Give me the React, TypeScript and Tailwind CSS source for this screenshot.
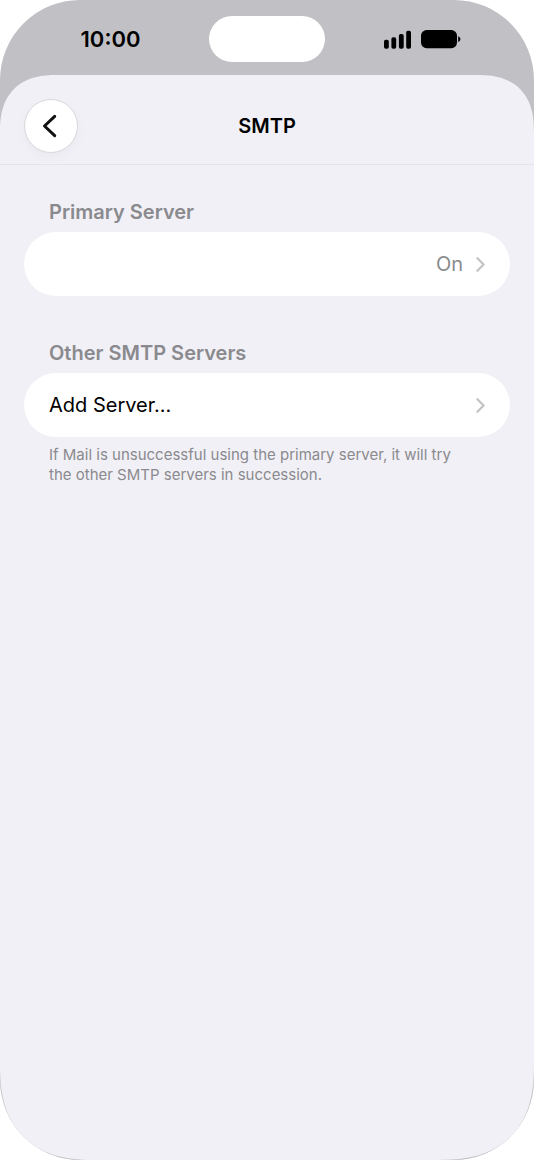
import type { ReactNode } from "react";

interface SectionProps {
  title: string;
  footer?: string;
  children: ReactNode;
}

interface RowProps {
  label?: string;
  value?: string;
  ariaLabel?: string;
}

function SignalIcon() {
  return (
    <svg width="27" height="19" viewBox="0 0 27 19" fill="currentColor" aria-hidden="true">
      <rect x="0" y="9.8" width="4.8" height="9" rx="1.8" />
      <rect x="7.4" y="7.3" width="4.8" height="11.5" rx="1.8" />
      <rect x="14.9" y="3.9" width="4.8" height="14.9" rx="1.8" />
      <rect x="22.2" y="0.8" width="4.8" height="18" rx="1.8" />
    </svg>
  );
}

function BatteryIcon() {
  return (
    <svg width="40" height="19" viewBox="0 0 40 19" fill="currentColor" aria-hidden="true">
      <rect x="0" y="0" width="36" height="18.2" rx="5.6" />
      <path d="M37.2 6.2c1.4.5 2.2 1.6 2.2 2.9s-.8 2.4-2.2 2.9z" />
    </svg>
  );
}

function ChevronRight() {
  return (
    <svg
      width="9"
      height="15"
      viewBox="0 0 9 15"
      fill="none"
      stroke="#c4c4c7"
      strokeWidth="2.3"
      strokeLinecap="round"
      strokeLinejoin="round"
      aria-hidden="true"
    >
      <path d="M1.4 1.3 7.6 7.5 1.4 13.7" />
    </svg>
  );
}

function StatusBar() {
  return (
    <div className="grid h-[75px] grid-cols-[1fr_116px_1fr] pt-4 text-black">
      <span className="mt-2 ml-3 text-center text-[22px] leading-[30px] font-semibold">
        10:00
      </span>
      <div className="h-[46px] rounded-full bg-white" />
      <div className="mt-[14px] mr-[14px] flex items-start justify-center gap-[10px]">
        <SignalIcon />
        <BatteryIcon />
      </div>
    </div>
  );
}

function Section({ title, footer, children }: SectionProps) {
  return (
    <section>
      <h2 className="mb-2 px-[25px] text-[20px] leading-6 font-semibold text-[#8a8a8e]">
        {title}
      </h2>
      {children}
      {footer && (
        <p className="mt-2 pr-10 pl-[25px] text-[15px] leading-5 text-[#8a8a8e]">{footer}</p>
      )}
    </section>
  );
}

function Row({ label, value, ariaLabel }: RowProps) {
  return (
    <button
      type="button"
      aria-label={ariaLabel}
      className="flex h-16 w-full items-center rounded-full bg-white px-[25px] text-left text-[20px] leading-6"
    >
      <span className="flex-1 text-black">{label}</span>
      {value && <span className="mr-[13px] text-[#8a8a8e]">{value}</span>}
      <ChevronRight />
    </button>
  );
}

export default function App() {
  return (
    <div className="min-h-screen bg-white font-['Inter',sans-serif]">
      <div className="flex min-h-screen flex-col overflow-hidden rounded-[80px] bg-[#c1c0c5]">
        <StatusBar />

        {/* Sheet */}
        <div className="flex-1 rounded-t-[57px] rounded-b-[95px] bg-[#f1f0f6] [corner-shape:superellipse(1.3)]">
          <header className="grid h-[90px] grid-cols-[54px_1fr_54px] items-center border-b border-[#e5e4ea] px-6 pt-[13px]">
            <button
              type="button"
              aria-label="Back"
              className="flex size-[54px] items-center justify-center rounded-full border border-[#d8d7dc] bg-white shadow-[0_4px_12px_rgba(0,0,0,0.03)]"
            >
              <svg
                width="15"
                height="24"
                viewBox="0 0 15 24"
                fill="none"
                stroke="#111"
                strokeWidth="3"
                strokeLinecap="round"
                strokeLinejoin="round"
                className="mr-1"
                aria-hidden="true"
              >
                <path d="M12.7 2.3 2.5 12l10.2 9.7" />
              </svg>
            </button>
            <h1 className="text-center text-[20px] leading-6 font-semibold text-black">SMTP</h1>
          </header>

          <main className="flex flex-col gap-[45px] px-6 pt-[35px]">
            <Section title="Primary Server">
              <Row value="On" ariaLabel="Primary server, On" />
            </Section>
            <Section
              title="Other SMTP Servers"
              footer="If Mail is unsuccessful using the primary server, it will try the other SMTP servers in succession."
            >
              <Row label="Add Server..." />
            </Section>
          </main>
        </div>
      </div>
    </div>
  );
}
